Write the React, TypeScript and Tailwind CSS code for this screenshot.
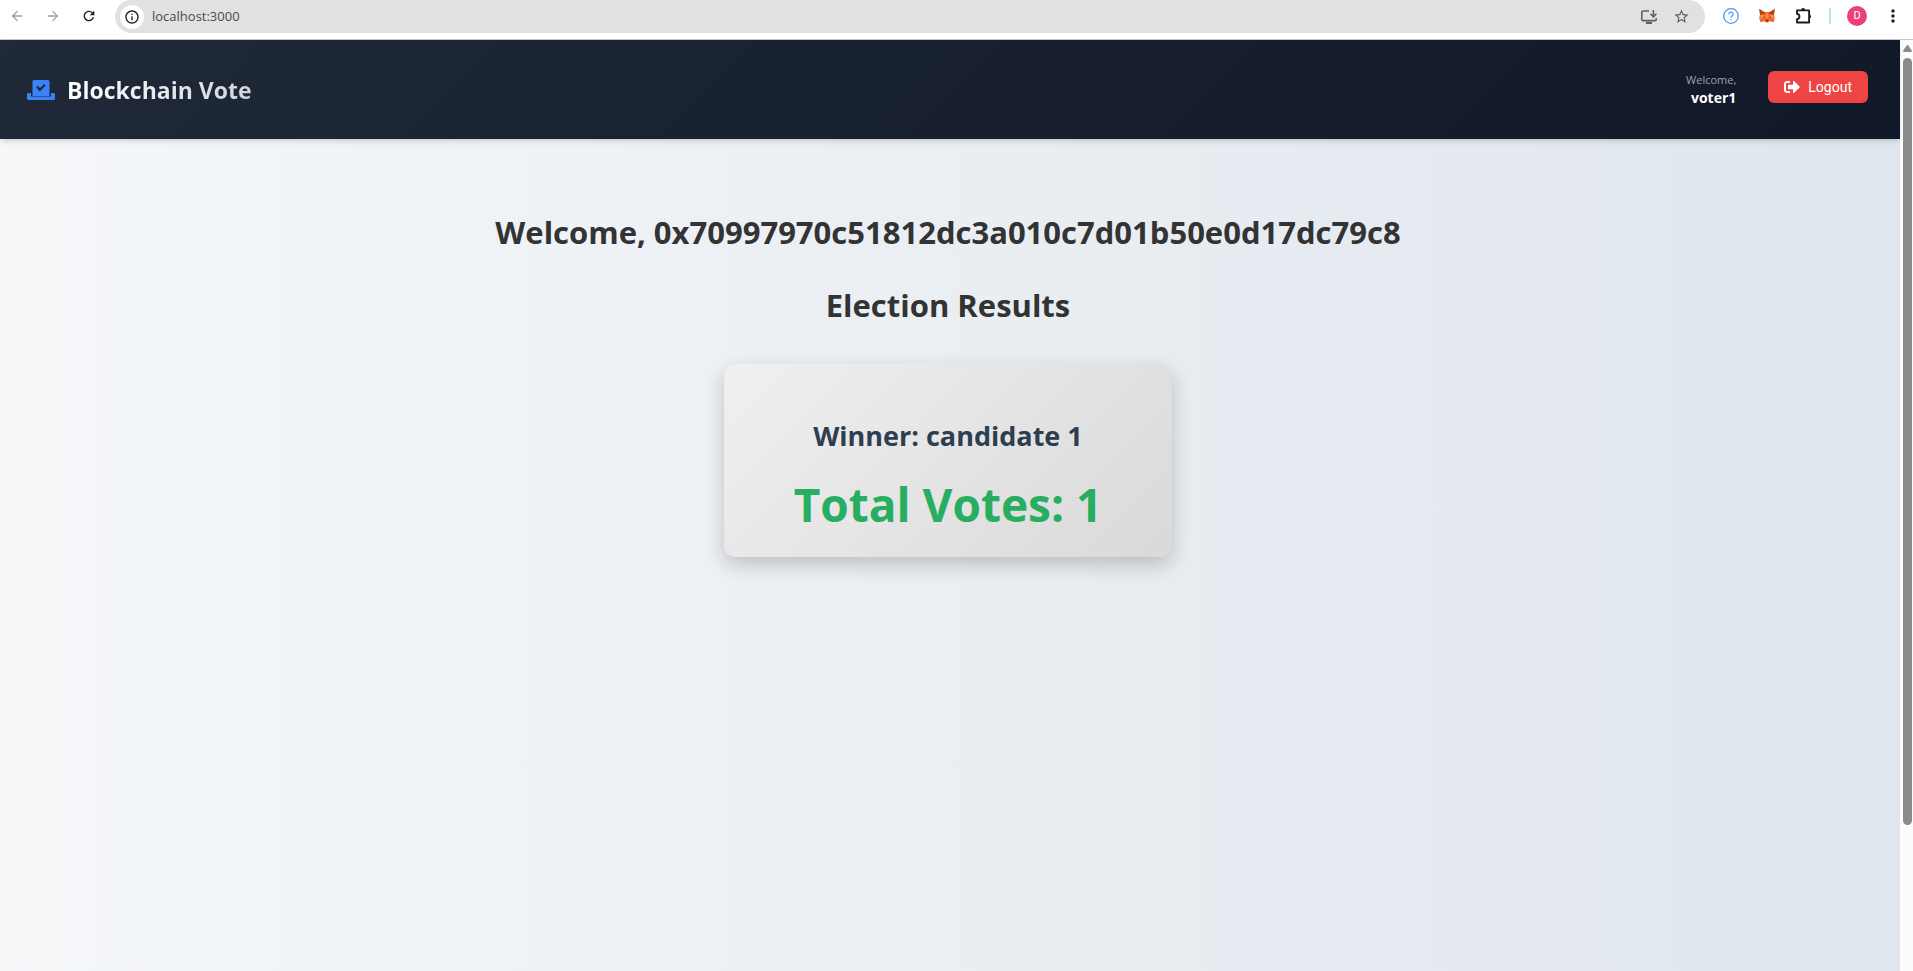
import React from "react";
import { FaSignOutAlt } from "react-icons/fa";
import {
  MdArrowBack,
  MdArrowForward,
  MdInfoOutline,
  MdMoreVert,
  MdRefresh,
  MdStarBorder,
} from "react-icons/md";

function InstallIcon() {
  return (
    <svg viewBox="0 0 16 14" className="h-[14px] w-4" fill="none" stroke="#5f6063" strokeWidth="1.6" aria-hidden="true">
      <path d="M8 1H2Q.8 1 .8 2.2V9.4Q.8 10.6 2 10.6H14Q15.200 10.600 15.200 9.400V8" />
      <path d="M12.400 0V6.200M9.400 3.800L12.400 6.800L15.400 3.800" />
      <path d="M5 12.900H11" strokeWidth="2.200" />
    </svg>
  );
}

function HelpIcon() {
  return (
    <svg viewBox="0 0 16 16" className="h-4 w-4" fill="none" stroke="#4a98f7" strokeWidth="1.3" aria-hidden="true">
      <circle cx="8" cy="8" r="7.300" />
      <path d="M5.900 6.200C5.900 3.500 10.100 3.500 10.100 6.100C10.100 7.700 8 7.800 8 9.700" />
      <path d="M8 11V12.200" />
    </svg>
  );
}

function FoxIcon() {
  return (
    <svg viewBox="0 0 16 14" className="h-[14px] w-4" aria-hidden="true">
      <path fill="#f0692a" d="M.3 0L5.800 3H10.200L15.700 0L15 5.500L15.800 9L14.600 13.300L10.800 12.300L9.400 13.600H6.600L5.200 12.300L1.400 13.300L.2 9L1 5.500Z" />
      <path fill="#b8441b" d="M.3 0L6.600 4.300L5 5.500L1.600 6L1 5.500ZM15.700 0L9.400 4.300L11 5.500L14.400 6L15 5.500Z" />
      <path fill="#ff8a4c" d="M1.600 6L5 5.500L5.800 9L1 9.500ZM14.400 6L11 5.500L10.200 9L15 9.500ZM6.600 4.300H9.400L9 9H7Z" />
      <path fill="#3a2a2a" d="M4 7.300L5.900 8.300L4.500 8.700ZM12 7.300L10.100 8.300L11.500 8.700ZM6.800 11H9.200V12.200H6.800Z" />
      <path fill="#e3d3c8" d="M5.200 12.300L6.600 12.600V13.600ZM10.800 12.300L9.400 12.600V13.600Z" />
    </svg>
  );
}

function PuzzleIcon() {
  return (
    <svg viewBox="0 0 18 18" className="h-[18px] w-[18px]" aria-hidden="true">
      <path
        fill="none"
        stroke="#1f1f1f"
        strokeWidth="1.900"
        strokeLinejoin="round"
        d="M2 3.400H14.100V15.500H2V12.200C5.200 11.600 5.200 7.300 2 6.700Z"
      />
      <path fill="#1f1f1f" d="M6 3.400A2.100 2.400 0 0 1 10.200 3.400ZM14.100 7.300A2.500 2.200 0 0 1 14.100 11.600Z" />
    </svg>
  );
}

function BallotBoxIcon() {
  return (
    <svg viewBox="0 0 28 20" className="h-5 w-7" fill="#3b82f6" aria-hidden="true">
      <path
        fillRule="evenodd"
        d="M7 0H21Q22.500 0 22.500 1.500V16H5.500V1.500Q5.500 0 7 0ZM9.300 7.300L12.700 11.400L18.700 5.500L17.100 4L12.900 8.200L11 5.800Z"
      />
      <path d="M1.500 13H4V16.600H24V13H26.500Q28 13 28 14.500V18.500Q28 20 26.500 20H1.500Q0 20 0 18.500V14.500Q0 13 1.500 13Z" />
    </svg>
  );
}

function BrowserBar() {
  return (
    <div className="flex h-10 shrink-0 items-start border-b border-[#c6c6c8] bg-white">
      <div className="flex h-8 w-[115px] shrink-0 items-center gap-5 pl-[9px] text-base">
        <button aria-label="Back" className="text-[#a0a0a0]"><MdArrowBack /></button>
        <button aria-label="Forward" className="text-[#a0a0a0]"><MdArrowForward /></button>
        <button aria-label="Reload" className="text-[#1f1f1f]"><MdRefresh /></button>
      </div>
      <div className="flex h-[33px] grow items-center rounded-full bg-[#e1e1e1] pl-[5px] pr-[15px]">
        <button aria-label="Site information" className="flex h-6 w-6 items-center justify-center rounded-full bg-white text-base text-[#1f1f1f]">
          <MdInfoOutline />
        </button>
        <input
          aria-label="Address"
          defaultValue="localhost:3000"
          className="ml-2 h-6 grow bg-transparent pb-[2px] font-['Open_Sans',sans-serif] text-[13px] text-[#4a4a4a] outline-none"
        />
        <div className="flex items-center gap-4">
          <button aria-label="Install app"><InstallIcon /></button>
          <button aria-label="Bookmark" className="text-[17px] text-[#5f6063]"><MdStarBorder /></button>
        </div>
      </div>
      <div className="flex h-8 w-[208px] shrink-0 items-center pl-[18px]">
        <button aria-label="Help"><HelpIcon /></button>
        <button aria-label="Wallet" className="ml-5"><FoxIcon /></button>
        <button aria-label="Extensions" className="ml-5"><PuzzleIcon /></button>
        <span className="ml-4 h-4 w-[2px] bg-[#b5e7f3]" />
        <button aria-label="Profile" className="ml-4 flex h-5 w-5 items-center justify-center rounded-full bg-[#ec407a] font-['Roboto',sans-serif] text-[11px] text-white">
          D
        </button>
        <button aria-label="More" className="ml-4 text-xl text-[#1f1f1f]"><MdMoreVert /></button>
      </div>
    </div>
  );
}

function Header() {
  return (
    <header className="z-10 flex h-[99px] shrink-0 items-center justify-between bg-linear-135 from-[#1f2937] to-[#111827] pl-[27px] pr-8 shadow-md">
      <div className="flex items-center gap-3">
        <BallotBoxIcon />
        <span className="bg-linear-to-r from-white to-[#d1d5db] bg-clip-text pt-[2px] text-[23px] font-bold text-transparent">
          Blockchain Vote
        </span>
      </div>
      <div className="flex items-start gap-8 pb-[2px]">
        <div className="flex flex-col items-end">
          <span className="text-[11px] leading-[18px] text-[#9ca3af]">Welcome,</span>
          <span className="text-sm font-bold leading-[18px] text-white">voter1</span>
        </div>
        <button className="flex h-8 items-center gap-2 rounded-md bg-[#ef4444] px-4 font-['Roboto',sans-serif] text-sm text-white">
          <FaSignOutAlt className="text-base" />
          Logout
        </button>
      </div>
    </header>
  );
}

function Results() {
  return (
    <main className="flex grow flex-col items-center bg-[linear-gradient(to_right,#f5f7f9,#dfe6ed)] pr-1 pt-[72px]">
      <h2 className="text-[31px] font-bold leading-[43px] text-[#333]">
        Welcome, 0x70997970c51812dc3a010c7d01b50e0d17dc79c8
      </h2>
      <h2 className="mt-[30px] text-[31px] font-bold leading-[43px] text-[#333]">Election Results</h2>
      <section className="mt-[37px] flex w-full max-w-md flex-col items-center rounded-xl bg-linear-135 from-[#f0f0f0] to-[#d9d9d9] pb-[21px] pt-[52px] shadow-[0_8px_20px_rgba(0,0,0,0.2)]">
        <h3 className="text-[27px] font-bold leading-10 text-[#2c3e50]">Winner: candidate 1</h3>
        <p className="mt-[17px] text-[46px] font-bold leading-[63px] text-[#27ae60]">Total Votes: 1</p>
      </section>
    </main>
  );
}

function ScrollRail() {
  return (
    <div className="flex w-[13px] shrink-0 flex-col items-end bg-[#fcfcfc] pr-px pt-[5px]" aria-hidden="true">
      <svg viewBox="0 0 9 7" className="h-[7px] w-[9px]" fill="#8b8b8b">
        <path d="M3.600 .6Q4.500-.4 5.400 .6L8.800 5.400Q9.200 7 8 7H1Q-.2 7 .2 5.400Z" />
      </svg>
      <div className="mt-[6px] w-[9px] grow">
        <div className="h-[84%] rounded-full bg-[#8b8b8b]" />
      </div>
    </div>
  );
}

export default function App() {
  return (
    <div className="flex h-screen flex-col overflow-hidden font-['Open_Sans','Noto_Sans',sans-serif]">
      <BrowserBar />
      <div className="flex min-h-0 grow">
        <div className="flex min-w-0 grow flex-col">
          <Header />
          <Results />
        </div>
        <ScrollRail />
      </div>
    </div>
  );
}
